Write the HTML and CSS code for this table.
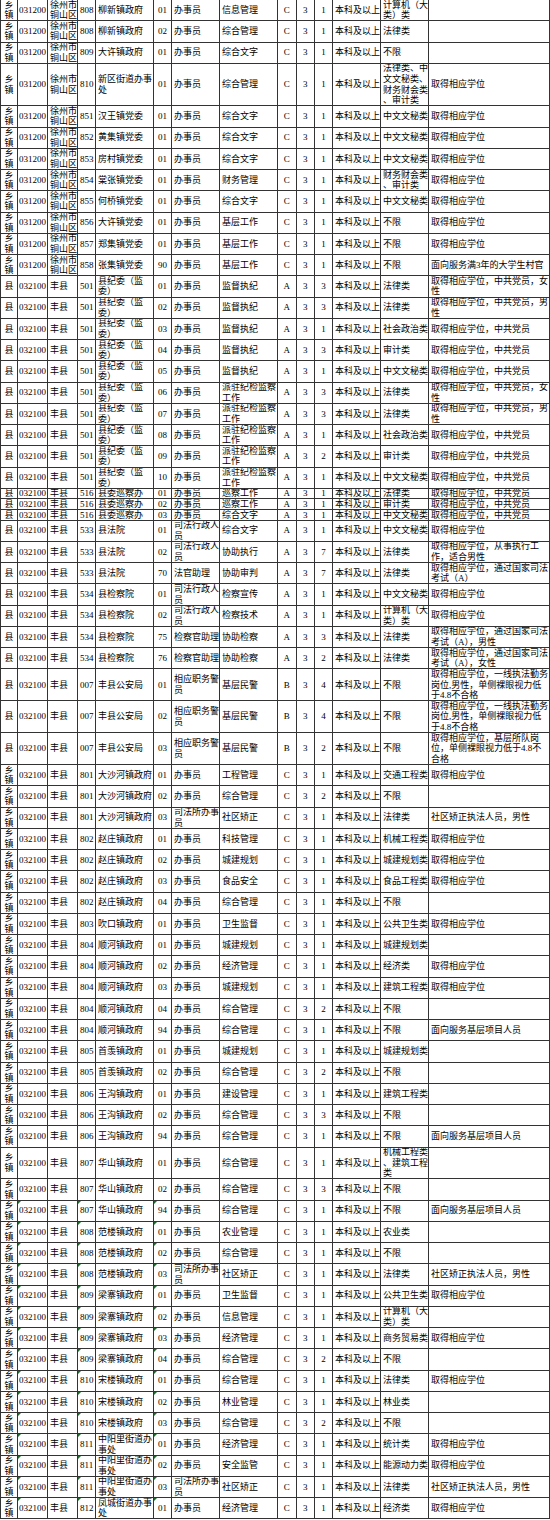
FILE: index.html
```html
<!DOCTYPE html>
<html lang="zh-CN">
<head>
<meta charset="utf-8">
<title>职位表</title>
<link rel="stylesheet" href="styles.css">
</head>
<body>
<div class="sheet">
<div class="r"><span><i>乡<br>镇</i></span><span>031200</span><span><i>徐州市<br>铜山区</i></span><span>808</span><span>柳新镇政府</span><span>01</span><span>办事员</span><span>信息管理</span><span>C</span><span>3</span><span>1</span><span>本科及以上</span><span><i>计算机（大<br>类）类</i></span><span></span></div>
<div class="r"><span><i>乡<br>镇</i></span><span>031200</span><span><i>徐州市<br>铜山区</i></span><span>808</span><span>柳新镇政府</span><span>02</span><span>办事员</span><span>综合管理</span><span>C</span><span>3</span><span>1</span><span>本科及以上</span><span>法律类</span><span></span></div>
<div class="r"><span><i>乡<br>镇</i></span><span>031200</span><span><i>徐州市<br>铜山区</i></span><span>809</span><span>大许镇政府</span><span>01</span><span>办事员</span><span>综合文字</span><span>C</span><span>3</span><span>1</span><span>本科及以上</span><span>不限</span><span></span></div>
<div class="r d"><span><i>乡<br>镇</i></span><span>031200</span><span><i>徐州市<br>铜山区</i></span><span>810</span><span><i>新区街道办事<br>处</i></span><span>01</span><span>办事员</span><span>综合管理</span><span>C</span><span>3</span><span>1</span><span>本科及以上</span><span><i>法律类、中<br>文文秘类、<br>财务财会类<br>、审计类</i></span><span>取得相应学位</span></div>
<div class="r"><span><i>乡<br>镇</i></span><span>031200</span><span><i>徐州市<br>铜山区</i></span><span>851</span><span>汉王镇党委</span><span>01</span><span>办事员</span><span>综合文字</span><span>C</span><span>3</span><span>1</span><span>本科及以上</span><span>中文文秘类</span><span>取得相应学位</span></div>
<div class="r"><span><i>乡<br>镇</i></span><span>031200</span><span><i>徐州市<br>铜山区</i></span><span>852</span><span>黄集镇党委</span><span>01</span><span>办事员</span><span>综合文字</span><span>C</span><span>3</span><span>1</span><span>本科及以上</span><span>中文文秘类</span><span>取得相应学位</span></div>
<div class="r"><span><i>乡<br>镇</i></span><span>031200</span><span><i>徐州市<br>铜山区</i></span><span>853</span><span>房村镇党委</span><span>01</span><span>办事员</span><span>综合文字</span><span>C</span><span>3</span><span>1</span><span>本科及以上</span><span>中文文秘类</span><span>取得相应学位</span></div>
<div class="r"><span><i>乡<br>镇</i></span><span>031200</span><span><i>徐州市<br>铜山区</i></span><span>854</span><span>棠张镇党委</span><span>01</span><span>办事员</span><span>财务管理</span><span>C</span><span>3</span><span>1</span><span>本科及以上</span><span><i>财务财会类<br>、审计类</i></span><span>取得相应学位</span></div>
<div class="r"><span><i>乡<br>镇</i></span><span>031200</span><span><i>徐州市<br>铜山区</i></span><span>855</span><span>何桥镇党委</span><span>01</span><span>办事员</span><span>综合文字</span><span>C</span><span>3</span><span>1</span><span>本科及以上</span><span>中文文秘类</span><span>取得相应学位</span></div>
<div class="r"><span><i>乡<br>镇</i></span><span>031200</span><span><i>徐州市<br>铜山区</i></span><span>856</span><span>大许镇党委</span><span>01</span><span>办事员</span><span>基层工作</span><span>C</span><span>3</span><span>1</span><span>本科及以上</span><span>不限</span><span>取得相应学位</span></div>
<div class="r"><span><i>乡<br>镇</i></span><span>031200</span><span><i>徐州市<br>铜山区</i></span><span>857</span><span>郑集镇党委</span><span>01</span><span>办事员</span><span>基层工作</span><span>C</span><span>3</span><span>1</span><span>本科及以上</span><span>不限</span><span>取得相应学位</span></div>
<div class="r"><span><i>乡<br>镇</i></span><span>031200</span><span><i>徐州市<br>铜山区</i></span><span>858</span><span>张集镇党委</span><span>90</span><span>办事员</span><span>基层工作</span><span>C</span><span>3</span><span>1</span><span>本科及以上</span><span>不限</span><span>面向服务满3年的大学生村官</span></div>
<div class="r"><span>县</span><span>032100</span><span>丰县</span><span>501</span><span><i>县纪委（监<br>委）</i></span><span>01</span><span>办事员</span><span>监督执纪</span><span>A</span><span>3</span><span>3</span><span>本科及以上</span><span>法律类</span><span><i>取得相应学位，中共党员，女<br>性</i></span></div>
<div class="r"><span>县</span><span>032100</span><span>丰县</span><span>501</span><span><i>县纪委（监<br>委）</i></span><span>02</span><span>办事员</span><span>监督执纪</span><span>A</span><span>3</span><span>3</span><span>本科及以上</span><span>法律类</span><span><i>取得相应学位，中共党员，男<br>性</i></span></div>
<div class="r"><span>县</span><span>032100</span><span>丰县</span><span>501</span><span><i>县纪委（监<br>委）</i></span><span>03</span><span>办事员</span><span>监督执纪</span><span>A</span><span>3</span><span>1</span><span>本科及以上</span><span>社会政治类</span><span>取得相应学位，中共党员</span></div>
<div class="r"><span>县</span><span>032100</span><span>丰县</span><span>501</span><span><i>县纪委（监<br>委）</i></span><span>04</span><span>办事员</span><span>监督执纪</span><span>A</span><span>3</span><span>3</span><span>本科及以上</span><span>审计类</span><span>取得相应学位，中共党员</span></div>
<div class="r"><span>县</span><span>032100</span><span>丰县</span><span>501</span><span><i>县纪委（监<br>委）</i></span><span>05</span><span>办事员</span><span>监督执纪</span><span>A</span><span>3</span><span>1</span><span>本科及以上</span><span>中文文秘类</span><span>取得相应学位，中共党员</span></div>
<div class="r"><span>县</span><span>032100</span><span>丰县</span><span>501</span><span><i>县纪委（监<br>委）</i></span><span>06</span><span>办事员</span><span><i>派驻纪检监察<br>工作</i></span><span>A</span><span>3</span><span>3</span><span>本科及以上</span><span>法律类</span><span><i>取得相应学位，中共党员，女<br>性</i></span></div>
<div class="r"><span>县</span><span>032100</span><span>丰县</span><span>501</span><span><i>县纪委（监<br>委）</i></span><span>07</span><span>办事员</span><span><i>派驻纪检监察<br>工作</i></span><span>A</span><span>3</span><span>3</span><span>本科及以上</span><span>法律类</span><span><i>取得相应学位，中共党员，男<br>性</i></span></div>
<div class="r"><span>县</span><span>032100</span><span>丰县</span><span>501</span><span><i>县纪委（监<br>委）</i></span><span>08</span><span>办事员</span><span><i>派驻纪检监察<br>工作</i></span><span>A</span><span>3</span><span>1</span><span>本科及以上</span><span>社会政治类</span><span>取得相应学位，中共党员</span></div>
<div class="r"><span>县</span><span>032100</span><span>丰县</span><span>501</span><span><i>县纪委（监<br>委）</i></span><span>09</span><span>办事员</span><span><i>派驻纪检监察<br>工作</i></span><span>A</span><span>3</span><span>2</span><span>本科及以上</span><span>审计类</span><span>取得相应学位，中共党员</span></div>
<div class="r"><span>县</span><span>032100</span><span>丰县</span><span>501</span><span><i>县纪委（监<br>委）</i></span><span>10</span><span>办事员</span><span><i>派驻纪检监察<br>工作</i></span><span>A</span><span>3</span><span>1</span><span>本科及以上</span><span>中文文秘类</span><span>取得相应学位，中共党员</span></div>
<div class="r h"><span>县</span><span>032100</span><span>丰县</span><span>516</span><span>县委巡察办</span><span>01</span><span>办事员</span><span>巡察工作</span><span>A</span><span>3</span><span>1</span><span>本科及以上</span><span>法律类</span><span>取得相应学位，中共党员</span></div>
<div class="r h"><span>县</span><span>032100</span><span>丰县</span><span>516</span><span>县委巡察办</span><span>02</span><span>办事员</span><span>巡察工作</span><span>A</span><span>3</span><span>1</span><span>本科及以上</span><span>审计类</span><span>取得相应学位，中共党员</span></div>
<div class="r h"><span>县</span><span>032100</span><span>丰县</span><span>516</span><span>县委巡察办</span><span>03</span><span>办事员</span><span>综合文字</span><span>A</span><span>3</span><span>1</span><span>本科及以上</span><span>中文文秘类</span><span>取得相应学位，中共党员</span></div>
<div class="r"><span>县</span><span>032100</span><span>丰县</span><span>533</span><span>县法院</span><span>01</span><span><i>司法行政人<br>员</i></span><span>综合文字</span><span>A</span><span>3</span><span>1</span><span>本科及以上</span><span>中文文秘类</span><span>取得相应学位</span></div>
<div class="r"><span>县</span><span>032100</span><span>丰县</span><span>533</span><span>县法院</span><span>02</span><span><i>司法行政人<br>员</i></span><span>协助执行</span><span>A</span><span>3</span><span>7</span><span>本科及以上</span><span>法律类</span><span><i>取得相应学位，从事执行工<br>作，适合男性</i></span></div>
<div class="r"><span>县</span><span>032100</span><span>丰县</span><span>533</span><span>县法院</span><span>70</span><span>法官助理</span><span>协助审判</span><span>A</span><span>3</span><span>7</span><span>本科及以上</span><span>法律类</span><span><i>取得相应学位，通过国家司法<br>考试（A）</i></span></div>
<div class="r"><span>县</span><span>032100</span><span>丰县</span><span>534</span><span>县检察院</span><span>01</span><span><i>司法行政人<br>员</i></span><span>检察宣传</span><span>A</span><span>3</span><span>1</span><span>本科及以上</span><span>中文文秘类</span><span>取得相应学位</span></div>
<div class="r"><span>县</span><span>032100</span><span>丰县</span><span>534</span><span>县检察院</span><span>02</span><span><i>司法行政人<br>员</i></span><span>检察技术</span><span>A</span><span>3</span><span>1</span><span>本科及以上</span><span><i>计算机（大<br>类）类</i></span><span>取得相应学位</span></div>
<div class="r"><span>县</span><span>032100</span><span>丰县</span><span>534</span><span>县检察院</span><span>75</span><span>检察官助理</span><span>协助检察</span><span>A</span><span>3</span><span>3</span><span>本科及以上</span><span>法律类</span><span><i>取得相应学位，通过国家司法<br>考试（A），男性</i></span></div>
<div class="r"><span>县</span><span>032100</span><span>丰县</span><span>534</span><span>县检察院</span><span>76</span><span>检察官助理</span><span>协助检察</span><span>A</span><span>3</span><span>2</span><span>本科及以上</span><span>法律类</span><span><i>取得相应学位，通过国家司法<br>考试（A），女性</i></span></div>
<div class="r t"><span>县</span><span>032100</span><span>丰县</span><span>007</span><span>丰县公安局</span><span>01</span><span><i>相应职务警<br>员</i></span><span>基层民警</span><span>B</span><span>3</span><span>4</span><span>本科及以上</span><span>不限</span><span><i>取得相应学位，一线执法勤务<br>岗位,男性，单侧裸眼视力低<br>于4.8不合格</i></span></div>
<div class="r t"><span>县</span><span>032100</span><span>丰县</span><span>007</span><span>丰县公安局</span><span>02</span><span><i>相应职务警<br>员</i></span><span>基层民警</span><span>B</span><span>3</span><span>4</span><span>本科及以上</span><span>不限</span><span><i>取得相应学位，一线执法勤务<br>岗位,男性，单侧裸眼视力低<br>于4.8不合格</i></span></div>
<div class="r t"><span>县</span><span>032100</span><span>丰县</span><span>007</span><span>丰县公安局</span><span>03</span><span><i>相应职务警<br>员</i></span><span>基层民警</span><span>B</span><span>3</span><span>2</span><span>本科及以上</span><span>不限</span><span><i>取得相应学位，基层所队岗<br>位，单侧裸眼视力低于4.8不<br>合格</i></span></div>
<div class="r"><span><i>乡<br>镇</i></span><span>032100</span><span>丰县</span><span>801</span><span>大沙河镇政府</span><span>01</span><span>办事员</span><span>工程管理</span><span>C</span><span>3</span><span>1</span><span>本科及以上</span><span>交通工程类</span><span>取得相应学位</span></div>
<div class="r"><span><i>乡<br>镇</i></span><span>032100</span><span>丰县</span><span>801</span><span>大沙河镇政府</span><span>02</span><span>办事员</span><span>综合管理</span><span>C</span><span>3</span><span>2</span><span>本科及以上</span><span>不限</span><span></span></div>
<div class="r"><span><i>乡<br>镇</i></span><span>032100</span><span>丰县</span><span>801</span><span>大沙河镇政府</span><span>03</span><span><i>司法所办事<br>员</i></span><span>社区矫正</span><span>C</span><span>3</span><span>1</span><span>本科及以上</span><span>法律类</span><span>社区矫正执法人员，男性</span></div>
<div class="r"><span><i>乡<br>镇</i></span><span>032100</span><span>丰县</span><span>802</span><span>赵庄镇政府</span><span>01</span><span>办事员</span><span>科技管理</span><span>C</span><span>3</span><span>1</span><span>本科及以上</span><span>机械工程类</span><span>取得相应学位</span></div>
<div class="r"><span><i>乡<br>镇</i></span><span>032100</span><span>丰县</span><span>802</span><span>赵庄镇政府</span><span>02</span><span>办事员</span><span>城建规划</span><span>C</span><span>3</span><span>1</span><span>本科及以上</span><span>城建规划类</span><span>取得相应学位</span></div>
<div class="r"><span><i>乡<br>镇</i></span><span>032100</span><span>丰县</span><span>802</span><span>赵庄镇政府</span><span>03</span><span>办事员</span><span>食品安全</span><span>C</span><span>3</span><span>1</span><span>本科及以上</span><span>食品工程类</span><span>取得相应学位</span></div>
<div class="r"><span><i>乡<br>镇</i></span><span>032100</span><span>丰县</span><span>802</span><span>赵庄镇政府</span><span>04</span><span>办事员</span><span>综合管理</span><span>C</span><span>3</span><span>1</span><span>本科及以上</span><span>不限</span><span></span></div>
<div class="r"><span><i>乡<br>镇</i></span><span>032100</span><span>丰县</span><span>803</span><span>吹口镇政府</span><span>01</span><span>办事员</span><span>卫生监督</span><span>C</span><span>3</span><span>1</span><span>本科及以上</span><span>公共卫生类</span><span>取得相应学位</span></div>
<div class="r"><span><i>乡<br>镇</i></span><span>032100</span><span>丰县</span><span>804</span><span>顺河镇政府</span><span>01</span><span>办事员</span><span>城建规划</span><span>C</span><span>3</span><span>1</span><span>本科及以上</span><span>城建规划类</span><span></span></div>
<div class="r"><span><i>乡<br>镇</i></span><span>032100</span><span>丰县</span><span>804</span><span>顺河镇政府</span><span>02</span><span>办事员</span><span>经济管理</span><span>C</span><span>3</span><span>1</span><span>本科及以上</span><span>经济类</span><span>取得相应学位</span></div>
<div class="r"><span><i>乡<br>镇</i></span><span>032100</span><span>丰县</span><span>804</span><span>顺河镇政府</span><span>03</span><span>办事员</span><span>城建规划</span><span>C</span><span>3</span><span>1</span><span>本科及以上</span><span>建筑工程类</span><span>取得相应学位</span></div>
<div class="r"><span><i>乡<br>镇</i></span><span>032100</span><span>丰县</span><span>804</span><span>顺河镇政府</span><span>04</span><span>办事员</span><span>综合管理</span><span>C</span><span>3</span><span>2</span><span>本科及以上</span><span>不限</span><span></span></div>
<div class="r"><span><i>乡<br>镇</i></span><span>032100</span><span>丰县</span><span>804</span><span>顺河镇政府</span><span>94</span><span>办事员</span><span>综合管理</span><span>C</span><span>3</span><span>1</span><span>本科及以上</span><span>不限</span><span>面向服务基层项目人员</span></div>
<div class="r"><span><i>乡<br>镇</i></span><span>032100</span><span>丰县</span><span>805</span><span>首羡镇政府</span><span>01</span><span>办事员</span><span>城建规划</span><span>C</span><span>3</span><span>1</span><span>本科及以上</span><span>城建规划类</span><span></span></div>
<div class="r"><span><i>乡<br>镇</i></span><span>032100</span><span>丰县</span><span>805</span><span>首羡镇政府</span><span>02</span><span>办事员</span><span>综合管理</span><span>C</span><span>3</span><span>2</span><span>本科及以上</span><span>不限</span><span></span></div>
<div class="r"><span><i>乡<br>镇</i></span><span>032100</span><span>丰县</span><span>806</span><span>王沟镇政府</span><span>01</span><span>办事员</span><span>建设管理</span><span>C</span><span>3</span><span>1</span><span>本科及以上</span><span>建筑工程类</span><span></span></div>
<div class="r"><span><i>乡<br>镇</i></span><span>032100</span><span>丰县</span><span>806</span><span>王沟镇政府</span><span>02</span><span>办事员</span><span>综合管理</span><span>C</span><span>3</span><span>3</span><span>本科及以上</span><span>不限</span><span></span></div>
<div class="r"><span><i>乡<br>镇</i></span><span>032100</span><span>丰县</span><span>806</span><span>王沟镇政府</span><span>94</span><span>办事员</span><span>综合管理</span><span>C</span><span>3</span><span>1</span><span>本科及以上</span><span>不限</span><span>面向服务基层项目人员</span></div>
<div class="r t"><span><i>乡<br>镇</i></span><span>032100</span><span>丰县</span><span>807</span><span>华山镇政府</span><span>01</span><span>办事员</span><span>综合管理</span><span>C</span><span>3</span><span>1</span><span>本科及以上</span><span><i>机械工程类<br>、建筑工程<br>类</i></span><span></span></div>
<div class="r"><span><i>乡<br>镇</i></span><span>032100</span><span>丰县</span><span>807</span><span>华山镇政府</span><span>02</span><span>办事员</span><span>综合管理</span><span>C</span><span>3</span><span>3</span><span>本科及以上</span><span>不限</span><span></span></div>
<div class="r g"><span><i>乡<br>镇</i></span><span>032100</span><span>丰县</span><span>807</span><span>华山镇政府</span><span>94</span><span>办事员</span><span>综合管理</span><span>C</span><span>3</span><span>1</span><span>本科及以上</span><span>不限</span><span>面向服务基层项目人员</span></div>
<div class="r g"><span><i>乡<br>镇</i></span><span>032100</span><span>丰县</span><span>808</span><span>范楼镇政府</span><span>01</span><span>办事员</span><span>农业管理</span><span>C</span><span>3</span><span>1</span><span>本科及以上</span><span>农业类</span><span></span></div>
<div class="r g"><span><i>乡<br>镇</i></span><span>032100</span><span>丰县</span><span>808</span><span>范楼镇政府</span><span>02</span><span>办事员</span><span>综合管理</span><span>C</span><span>3</span><span>1</span><span>本科及以上</span><span>不限</span><span></span></div>
<div class="r g"><span><i>乡<br>镇</i></span><span>032100</span><span>丰县</span><span>808</span><span>范楼镇政府</span><span>03</span><span><i>司法所办事<br>员</i></span><span>社区矫正</span><span>C</span><span>3</span><span>1</span><span>本科及以上</span><span>法律类</span><span>社区矫正执法人员，男性</span></div>
<div class="r g"><span><i>乡<br>镇</i></span><span>032100</span><span>丰县</span><span>809</span><span>梁寨镇政府</span><span>01</span><span>办事员</span><span>卫生监督</span><span>C</span><span>3</span><span>1</span><span>本科及以上</span><span>公共卫生类</span><span>取得相应学位</span></div>
<div class="r g"><span><i>乡<br>镇</i></span><span>032100</span><span>丰县</span><span>809</span><span>梁寨镇政府</span><span>02</span><span>办事员</span><span>信息管理</span><span>C</span><span>3</span><span>1</span><span>本科及以上</span><span><i>计算机（大<br>类）类</i></span><span></span></div>
<div class="r g"><span><i>乡<br>镇</i></span><span>032100</span><span>丰县</span><span>809</span><span>梁寨镇政府</span><span>03</span><span>办事员</span><span>经济管理</span><span>C</span><span>3</span><span>1</span><span>本科及以上</span><span>商务贸易类</span><span>取得相应学位</span></div>
<div class="r g"><span><i>乡<br>镇</i></span><span>032100</span><span>丰县</span><span>809</span><span>梁寨镇政府</span><span>04</span><span>办事员</span><span>综合管理</span><span>C</span><span>3</span><span>2</span><span>本科及以上</span><span>不限</span><span></span></div>
<div class="r g"><span><i>乡<br>镇</i></span><span>032100</span><span>丰县</span><span>810</span><span>宋楼镇政府</span><span>01</span><span>办事员</span><span>综合管理</span><span>C</span><span>3</span><span>1</span><span>本科及以上</span><span>法律类</span><span>取得相应学位</span></div>
<div class="r g"><span><i>乡<br>镇</i></span><span>032100</span><span>丰县</span><span>810</span><span>宋楼镇政府</span><span>02</span><span>办事员</span><span>林业管理</span><span>C</span><span>3</span><span>1</span><span>本科及以上</span><span>林业类</span><span></span></div>
<div class="r g"><span><i>乡<br>镇</i></span><span>032100</span><span>丰县</span><span>810</span><span>宋楼镇政府</span><span>03</span><span>办事员</span><span>综合管理</span><span>C</span><span>3</span><span>2</span><span>本科及以上</span><span>不限</span><span></span></div>
<div class="r g"><span><i>乡<br>镇</i></span><span>032100</span><span>丰县</span><span>811</span><span><i>中阳里街道办<br>事处</i></span><span>01</span><span>办事员</span><span>经济管理</span><span>C</span><span>3</span><span>1</span><span>本科及以上</span><span>统计类</span><span>取得相应学位</span></div>
<div class="r g"><span><i>乡<br>镇</i></span><span>032100</span><span>丰县</span><span>811</span><span><i>中阳里街道办<br>事处</i></span><span>02</span><span>办事员</span><span>安全监管</span><span>C</span><span>3</span><span>1</span><span>本科及以上</span><span>能源动力类</span><span>取得相应学位</span></div>
<div class="r g"><span><i>乡<br>镇</i></span><span>032100</span><span>丰县</span><span>811</span><span><i>中阳里街道办<br>事处</i></span><span>03</span><span><i>司法所办事<br>员</i></span><span>社区矫正</span><span>C</span><span>3</span><span>1</span><span>本科及以上</span><span>法律类</span><span>社区矫正执法人员，男性</span></div>
<div class="r g"><span><i>乡<br>镇</i></span><span>032100</span><span>丰县</span><span>812</span><span><i>凤城街道办事<br>处</i></span><span>01</span><span>办事员</span><span>经济管理</span><span>C</span><span>3</span><span>1</span><span>本科及以上</span><span>经济类</span><span>取得相应学位</span></div>
</div>
</body>
</html>
```

FILE: styles.css
```css
html, body {
  margin: 0;
  padding: 0;
  background: #ffffff;
}

body {
  width: 550px;
  overflow: hidden;
}

.sheet {
  font-family: "Liberation Serif", "Noto Sans CJK SC", serif;
  font-size: 9px;
  line-height: 10.6px;
  color: #000000;
}

.r {
  display: grid;
  grid-template-columns: 18px 30px 30px 18px 58px 18px 48px 58px 18.5px 18.5px 18px 48px 48px 121px;
  height: 21.25px;
}

.r.h { height: 10.625px; }
.r.t { height: 31.875px; }
.r.d { height: 42.5px; }

.r > span {
  position: relative;
  display: flex;
  align-items: center;
  padding-left: 2px;
  border-right: 1px solid #333333;
  border-bottom: 1px solid #333333;
  overflow: hidden;
  white-space: nowrap;
  box-sizing: border-box;
}

.r > span:first-child {
  border-left: 1px solid #333333;
}

.r > span:nth-child(2) {
  padding-left: 1px;
}

.r > span:nth-child(1),
.r > span:nth-child(6),
.r > span:nth-child(9),
.r > span:nth-child(10),
.r > span:nth-child(11) {
  justify-content: center;
  padding-left: 0;
}

.r > span > i {
  font-style: normal;
  display: block;
}

.r > span:nth-child(1) > i {
  text-align: center;
}

.g > span:nth-child(2)::before,
.g > span:nth-child(4)::before,
.g > span:nth-child(6)::before {
  content: "";
  position: absolute;
  left: 0;
  top: 0;
  width: 0;
  height: 0;
  border-top: 3px solid #1d6a2c;
  border-right: 3px solid transparent;
}
```
